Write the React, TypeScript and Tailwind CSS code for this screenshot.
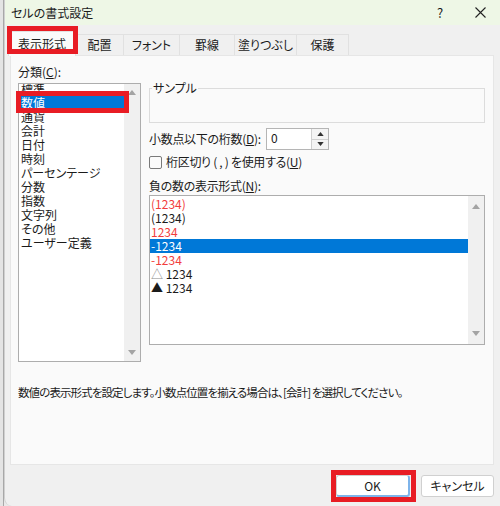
import React from "react";

const Up = ({ c = "#a3a3a3", w = 8, h = 5 }: { c?: string; w?: number; h?: number }) => (
  <svg width={w} height={h} viewBox="0 0 8 5"><path d="M0 5 L4 0 L8 5 Z" fill={c} /></svg>
);
const Down = ({ c = "#a3a3a3", w = 8, h = 5 }: { c?: string; w?: number; h?: number }) => (
  <svg width={w} height={h} viewBox="0 0 8 5"><path d="M0 0 L8 0 L4 5 Z" fill={c} /></svg>
);

const tabs = [
  { t: "配置", w: "w-[48px]" },
  { t: "フォント", w: "w-[56px]" },
  { t: "罫線", w: "w-[55px]" },
  { t: "塗りつぶし", w: "w-[62px]" },
  { t: "保護", w: "w-[52px]" },
];

const cats = ["標準", "数値", "通貨", "会計", "日付", "時刻", "パーセンテージ", "分数", "指数", "文字列", "その他", "ユーザー定義"];

export default function App() {
  return (
    <div className="relative flex w-[500px] h-[506px] overflow-hidden bg-[#e9e9e9] font-['Noto_Sans_CJK_JP',sans-serif] [font-feature-settings:'palt'] text-[12px] text-[#1b1b1b]">
      <div className="w-[4px] h-full bg-[#e4e4e4] border-r border-[#a8a8a8]" />
      <div className="flex-1 flex flex-col bg-[#f0f0f0] rounded-bl-[8px] border-l border-[#d0d0d0]">
        {/* title bar */}
        <div className="h-[25px] bg-[#eef7e6] flex items-center justify-between">
          <span className="pl-[6px] leading-[14px]">セルの書式設定</span>
          <div className="flex h-full">
            <div className="w-[40px] h-full flex items-center justify-center text-[13px]">?</div>
            <div className="w-[40px] h-full flex items-center justify-center">
              <svg width="11" height="11" viewBox="0 0 11 11"><path d="M0.5 0.5 L10.5 10.5 M10.5 0.5 L0.5 10.5" stroke="#222" strokeWidth="1.1" /></svg>
            </div>
          </div>
        </div>
        {/* tabs */}
        <div className="h-[30px] flex items-end pl-[3px]">
          <div className="w-[68px] h-[25px] bg-[#fafafa] border border-b-0 border-[#e1e1e1] flex items-center justify-center relative top-[1px]">表示形式</div>
          {tabs.map((x) => (
            <div key={x.t} className={`${x.w} h-[21px] bg-[#f0f0f0] border border-b-0 border-l-0 border-[#e1e1e1] flex items-center justify-center`}>
              {x.t}
            </div>
          ))}
        </div>
        {/* panel */}
        <div className="ml-[5px] mr-[6px] h-[410px] bg-[#fafafa] border border-[#e6e6e6] flex flex-col">
          <div className="flex">
            {/* left column */}
            <div className="pl-[7px] pt-[9px] flex flex-col">
              <div className="leading-[14px] h-[14px]">分類(<span className="underline">C</span>):</div>
              <div className="mt-[4px] w-[123px] h-[279px] border border-[#adadad] bg-white flex overflow-hidden">
                <div className="flex-1 flex flex-col -mt-[2px]">
                  {cats.map((c, i) => (
                    <div
                      key={c}
                      className={i === 1 ? "h-[14px] leading-[14px] pl-[2px] bg-[#0078d7] text-white" : "h-[14px] leading-[14px] pl-[2px]"}
                    >
                      {c}
                    </div>
                  ))}
                </div>
                <div className="w-[16px] h-full bg-[#f0f0f0] flex flex-col items-center justify-between py-[6px]">
                  <Up />
                  <Down />
                </div>
              </div>
            </div>
            {/* right column */}
            <div className="ml-[8px] w-[336px] pt-[25px] flex flex-col">
              <fieldset className="h-[42px] border border-[#dcdcdc] px-[2px]">
                <legend className="leading-[14px] px-[1px] ml-[0px]">サンプル</legend>
              </fieldset>
              <div className="mt-[5px] h-[22px] flex items-center">
                <span className="w-[117px] leading-[14px] tracking-[-0.3px]">小数点以下の桁数(<span className="underline">D</span>):</span>
                <div className="w-[63px] h-[22px] border border-[#b5b5b5] bg-white flex">
                  <span className="flex-1 pl-[4px] leading-[18px]">0</span>
                  <div className="w-[17px] flex flex-col border-l border-[#d0d0d0]">
                    <div className="flex-1 flex items-center justify-center bg-[#f4f4f4] border-b border-[#d0d0d0]"><Up c="#333" w={7} h={4} /></div>
                    <div className="flex-1 flex items-center justify-center bg-[#f4f4f4]"><Down c="#333" w={7} h={4} /></div>
                  </div>
                </div>
              </div>
              <div className="mt-[5px] h-[14px] flex items-center">
                <div className="w-[13px] h-[13px] rounded-[2px] border border-[#7a7a7a] bg-[#fbfbfb]" />
                <span className="ml-[4px] leading-[14px] tracking-[-0.3px]">桁区切り ( , ) を使用する(<span className="underline">U</span>)</span>
              </div>
              <div className="mt-[10px] h-[14px] leading-[14px] tracking-[-0.3px]">負の数の表示形式(<span className="underline">N</span>):</div>
              <div className="mt-[2px] h-[150px] border border-[#adadad] bg-white flex">
                <div className="flex-1 flex flex-col pt-[1px]">
                  <div className="h-[14px] leading-[14px] pl-[1px] text-[#f23c3c]">(1234)</div>
                  <div className="h-[14px] leading-[14px] pl-[1px]">(1234)</div>
                  <div className="h-[14px] leading-[14px] pl-[1px] text-[#f23c3c]">1234</div>
                  <div className="h-[14px] leading-[14px] pl-[1px] bg-[#0078d7] text-white">-1234</div>
                  <div className="h-[14px] leading-[14px] pl-[1px] text-[#f23c3c]">-1234</div>
                  <div className="h-[14px] leading-[14px] pl-[1px]"><span className="text-[#8a8a8a]">△</span> 1234</div>
                  <div className="h-[14px] leading-[14px] pl-[1px]">▲ 1234</div>
                </div>
                <div className="w-[16px] h-full bg-[#f0f0f0] flex flex-col items-center justify-between py-[8px]">
                  <Up />
                  <Down />
                </div>
              </div>
            </div>
          </div>
          <div className="mt-[23px] pl-[7px] h-[14px] leading-[14px] text-[11.5px] tracking-[-0.9px]">
            数値の表示形式を設定します。小数点位置を揃える場合は、[会計] を選択してください。
          </div>
        </div>
        {/* footer */}
        <div className="flex justify-end pt-[10px] pr-[6px] gap-[11px]">
          <button className="w-[74px] h-[22px] bg-white border border-[#d0d0d0] border-r-[#7eb4ea] border-b-[#7eb4ea] border-r-2 border-b-2 rounded-[3px] text-[12px]">OK</button>
          <button className="w-[73px] h-[22px] bg-white border border-[#d0d0d0] rounded-[3px] text-[12px]">キャンセル</button>
        </div>
      </div>
      {/* red annotation boxes */}
      <div className="absolute left-[7px] top-[26px] w-[71px] h-[28px] border-[5px] border-[#e81c24]" />
      <div className="absolute left-[16px] top-[91px] w-[113px] h-[22px] border-[5px] border-[#e81c24]" />
      <div className="absolute left-[331px] top-[470px] w-[85px] h-[32px] border-[5px] border-[#e81c24]" />
    </div>
  );
}
